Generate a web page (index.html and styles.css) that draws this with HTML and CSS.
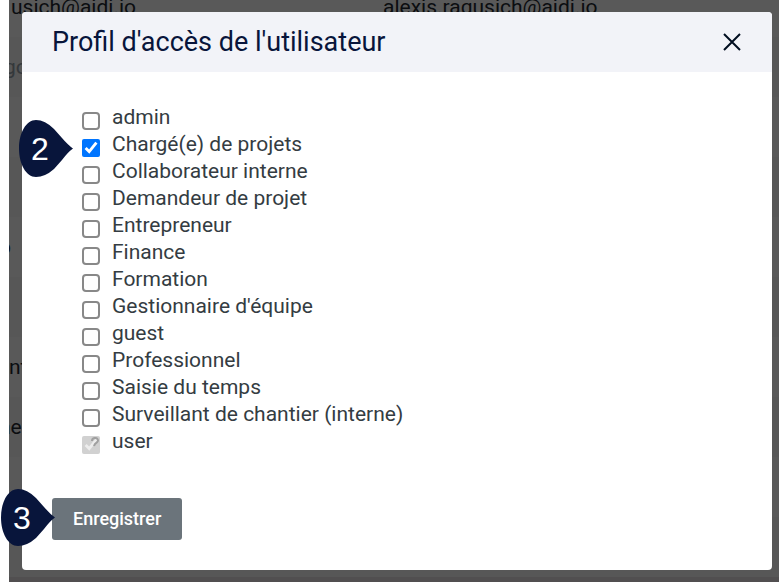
FILE: index.html
```html
<!DOCTYPE html>
<html lang="fr">
<head>
<meta charset="utf-8">
<title>Profil d'accès de l'utilisateur</title>
<link rel="stylesheet" href="styles.css">
</head>
<body>
<div class="page">
  <div class="users" aria-hidden="true">
    <div class="row"><span class="mail">usich@aidi.io</span><span>alexis.ragusich@aidi.io</span></div>
    <div class="row muted"><span class="cut-small">go</span></div>
    <div class="row"></div>
    <div class="row"></div>
    <div class="row"><span class="cut">o</span></div>
    <div class="row"></div>
    <div class="row"><span>nt</span></div>
    <div class="row"><span class="cut">ne</span></div>
    <div class="row"></div>
    <div class="row"></div>
    <div class="row"></div>
  </div>
  <section class="dialog" role="dialog" aria-labelledby="title">
    <header class="head">
      <h1 id="title">Profil d'accès de l'utilisateur</h1>
      <button class="close" type="button" aria-label="Fermer">
        <svg viewBox="0 0 18 18" width="18" height="18"><path d="M1 1L17 17M17 1L1 17" fill="none" stroke="#000d20" stroke-width="2"/></svg>
      </button>
    </header>
    <form class="form">
      <ul class="roles">
        <li><input type="checkbox" id="r1"><label for="r1">admin</label></li>
        <li><input type="checkbox" id="r2" checked><label for="r2">Chargé(e) de projets</label>
          <span class="pin"><svg viewBox="0 0 54 57" width="54" height="57"><path d="M54 28.500Q49 25 43 18L35 9Q26 0 17 0C7 0 0 13 0 28.500S7 57 17 57Q26 57 35 49L43 40Q49 32 54 28.500Z" fill="#08153b"/></svg><b>2</b></span></li>
        <li><input type="checkbox" id="r3"><label for="r3">Collaborateur interne</label></li>
        <li><input type="checkbox" id="r4"><label for="r4">Demandeur de projet</label></li>
        <li><input type="checkbox" id="r5"><label for="r5">Entrepreneur</label></li>
        <li><input type="checkbox" id="r6"><label for="r6">Finance</label></li>
        <li><input type="checkbox" id="r7"><label for="r7">Formation</label></li>
        <li><input type="checkbox" id="r8"><label for="r8">Gestionnaire d'équipe</label></li>
        <li><input type="checkbox" id="r9"><label for="r9">guest</label></li>
        <li><input type="checkbox" id="r10"><label for="r10">Professionnel</label></li>
        <li><input type="checkbox" id="r11"><label for="r11">Saisie du temps</label></li>
        <li><input type="checkbox" id="r12"><label for="r12">Surveillant de chantier (interne)</label></li>
        <li><input type="checkbox" id="r13" checked disabled><label for="r13">user</label>
          <svg class="help" viewBox="0 0 10 10" width="10" height="10"><path d="M2 4C2 0 8 0 8 3.500C8 6 5 5 4 9" fill="none" stroke="#a0a0a0" stroke-width="2"/></svg></li>
      </ul>
      <div class="actions">
        <button class="save" type="submit">Enregistrer</button>
        <span class="pin"><svg viewBox="0 0 54 57" width="54" height="57"><path d="M54 28.500Q49 25 43 18L35 9Q26 0 17 0C7 0 0 13 0 28.500S7 57 17 57Q26 57 35 49L43 40Q49 32 54 28.500Z" fill="#08153b"/></svg><b>3</b></span>
      </div>
    </form>
  </section>
</div>
</body>
</html>
```
FILE: styles.css
```css
* { box-sizing: border-box; }
body {
  margin: 0;
  background: #fff;
  font-family: Roboto, sans-serif;
  font-size: 21px;
  color: #343c42;
}
.page {
  position: relative;
  min-height: 100vh;
  padding: 12px 7px 12px 22px;
}

/* Dimmed user list behind the dialog */
.users {
  position: absolute;
  inset: 0 0 0 9px;
  overflow: hidden;
  background: #595959;
  color: #0b0d10;
}
.row {
  display: grid;
  grid-template-columns: 374px 1fr;
  align-items: center;
  height: 60px;
}
.row:first-child { margin-top: -23px; }
.row:nth-child(even) { background: #575757; }
.row:last-child { background: #514f50; }
.muted { color: #34383b; }
.mail { padding-left: 2px; }
.cut { text-indent: -10px; }
.cut-small { text-indent: -5px; }

.dialog {
  position: relative;
  background: #fff;
  border-radius: 4px;
}
.head {
  display: flex;
  align-items: center;
  justify-content: space-between;
  height: 60px;
  padding: 0 31px 0 30px;
  background: #f2f3f8;
  border-radius: 4px 4px 0 0;
}
h1 {
  margin: 0;
  font-size: 27px;
  font-weight: 400;
  line-height: 36px;
  color: #08153b;
}
.close {
  display: flex;
  padding: 0;
  border: 0;
  background: none;
}
.form { padding: 32px 30px 30px; }
.roles {
  margin: 0;
  padding: 0 30px;
  list-style: none;
}
.roles li {
  position: relative;
  display: flex;
  align-items: flex-start;
  gap: 12px;
  height: 27px;
}
.roles label { line-height: 27px; }
.roles input {
  width: 18px;
  height: 18px;
  margin: 8px 0 0;
  accent-color: #0075ff;
}
.roles input:not(:checked) {
  appearance: none;
  border: 2px solid #888;
  border-radius: 4px;
  background: #fff;
}
.help {
  position: absolute;
  left: 8px;
  top: 9px;
}
.actions {
  position: relative;
  display: flex;
  margin-top: 43px;
}
.save {
  height: 42px;
  padding: 0 21px;
  border: 0;
  border-radius: 3px;
  background: #6b747b;
  color: #fff;
  font: 500 18px/42px Roboto, sans-serif;
}

/* Numbered step markers */
.pin {
  position: absolute;
  left: -63px;
  top: -11px;
  width: 54px;
  height: 57px;
}
.actions .pin {
  left: -51px;
  top: -9px;
}
.pin svg { display: block; }
.pin b {
  position: absolute;
  inset: 0 12px 0 0;
  font-family: "Liberation Sans", sans-serif;
  font-size: 32px;
  font-weight: 400;
  line-height: 58px;
  text-align: center;
  color: #fff;
}
```
